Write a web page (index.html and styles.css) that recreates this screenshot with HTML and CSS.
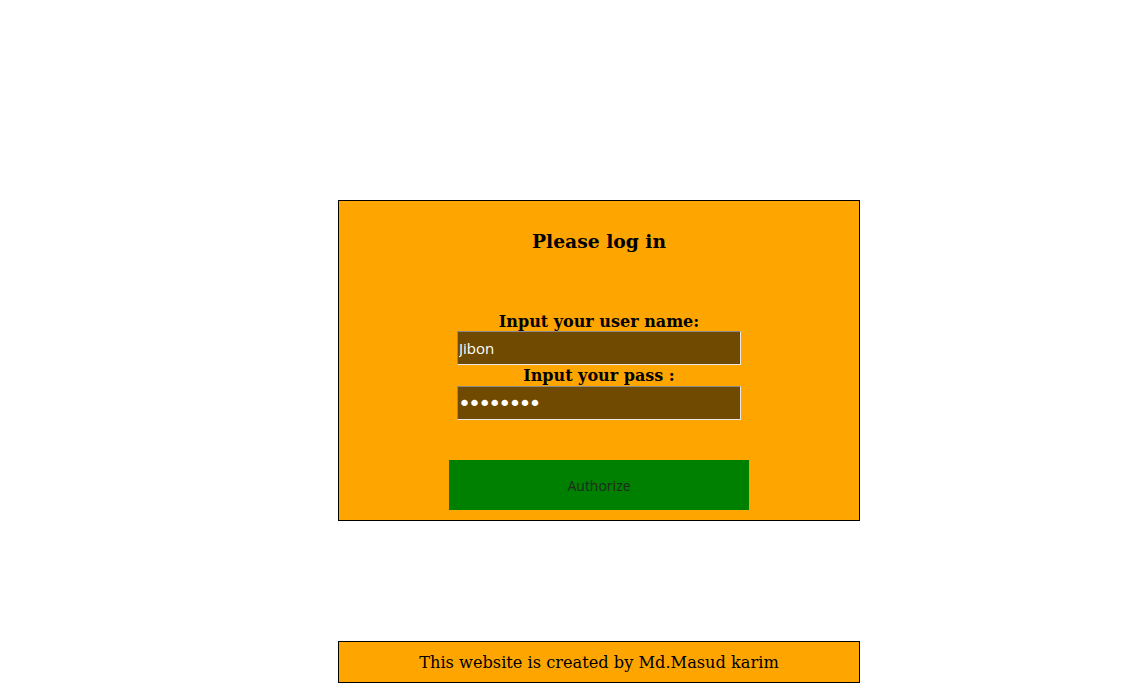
FILE: index.html
```html
<!DOCTYPE html>
<html>
<head>
<meta charset="utf-8">
<title>Login</title>
<link rel="stylesheet" href="styles.css">
</head>
<body>
<div class="page">
  <form class="card">
    <h3 class="title">Please log in</h3>
    <label class="label" for="user">Input your user name:</label>
    <input class="field" id="user" type="text" value="Jibon">
    <label class="label label-pass" for="pass">Input your pass :</label>
    <input class="field field-pass" id="pass" type="password" value="12345678">
    <button class="btn" type="button">Authorize</button>
  </form>
  <div class="footer">This website is created by Md.Masud karim</div>
</div>
</body>
</html>
```
FILE: styles.css
```css
html, body {
  margin: 0;
  padding: 0;
  background: #fff;
}
body {
  font-family: "DejaVu Serif", serif;
  color: #000;
}
.page {
  width: 522px;
  margin: 200px 0 0 338px;
}
.card {
  box-sizing: border-box;
  width: 522px;
  height: 321px;
  border: 1px solid #000;
  background: #ffa500;
  display: flex;
  flex-direction: column;
  align-items: center;
  padding-top: 29px;
}
.title {
  margin: 0;
  font-size: 18.72px;
  font-weight: bold;
  line-height: 22px;
}
.label {
  font-weight: bold;
  font-size: 16px;
  line-height: 19px;
}
.title + .label {
  margin-top: 60px;
}
.field {
  box-sizing: border-box;
  width: 284px;
  height: 34px;
  margin: 0;
  padding: 0 1px;
  background: #6f4a00;
  color: #fff;
  font-family: "Open Sans", sans-serif;
  font-size: 15px;
  border: 1px solid;
  border-color: #8a8a8a #e8e8e8 #e8e8e8 #8a8a8a;
  outline: none;
}
.field-pass {
  font-family: "DejaVu Sans", sans-serif;
  font-size: 22px;
  letter-spacing: -2.9px;
  padding-left: 0;
}
.label-pass {
  margin-top: 1px;
  line-height: 20px;
}
.btn {
  margin-top: 40px;
  width: 300px;
  height: 50px;
  border: none;
  background: #008000;
  color: #1f2a1f;
  font-family: "Open Sans", sans-serif;
  font-size: 14px;
  padding: 0;
  padding-top: 1px;
}
.footer {
  box-sizing: border-box;
  margin-top: 120px;
  width: 522px;
  height: 42px;
  border: 1px solid #000;
  background: #ffa500;
  text-align: center;
  font-size: 16.2px;
  line-height: 41px;
}
```
